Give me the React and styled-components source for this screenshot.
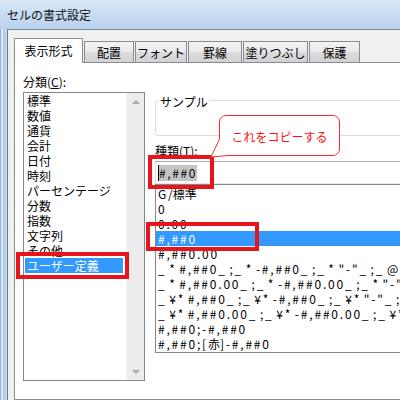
import React from 'react';
import styled, { createGlobalStyle } from 'styled-components';

const FONT = `"Noto Sans CJK JP", "Noto Sans", sans-serif`;

const Global = createGlobalStyle`
  html, body { margin: 0; padding: 0; width: 400px; height: 400px; overflow: hidden; background: #c9dcf1; }
  #root { width: 400px; height: 400px; overflow: hidden; }
`;

const Window = styled.div`
  width: 520px;
  height: 400px;
  display: flex;
  flex-direction: column;
  font-family: ${FONT};
  font-size: 12px;
  color: #000;
`;

const TitleBar = styled.div`
  height: 29px;
  flex: none;
  display: flex;
  align-items: center;
  padding-left: 7px;
  background: linear-gradient(#d9e7f6, #c6dbf1 55%, #b9d2ee);
  font-size: 12px;
  line-height: 15px;
  color: #111;
`;

const FrameRow = styled.div`
  flex: 1;
  display: flex;
  min-height: 0;
`;

const FrameEdge = styled.div`
  width: 7px;
  flex: none;
  background: linear-gradient(to right, #8eafd6 0, #8eafd6 1px, #dce9f7 1px, #dce9f7 3px, #a9c8ea 3px, #bcd5ef 6px, #cfe0f3 7px);
`;

const Body = styled.div`
  flex: 1;
  background: #f0f0f0;
  border-left: 1px solid #6d7b8b;
  border-top: 1px solid #7d8c9e;
  padding: 8px 0 0 6px;
  display: flex;
  flex-direction: column;
`;

const TabRow = styled.div`
  display: flex;
  align-items: flex-end;
  gap: 1px;
  height: 25px;
  margin-bottom: -1px;
  position: relative;
  z-index: 2;
`;

const Tab = styled.div`
  box-sizing: border-box;
  width: ${p => p.$w}px;
  height: ${p => (p.$active ? 25 : 22)}px;
  border: 1px solid #898c95;
  border-bottom: ${p => (p.$active ? 'none' : '1px solid #898c95')};
  background: ${p => (p.$active ? '#ffffff' : 'linear-gradient(#f3f3f3, #e9e9e9 50%, #dcdcdc 51%, #d2d2d2)')};
  display: flex;
  align-items: center;
  justify-content: center;
  font-size: 12px;
  line-height: 15px;
  padding-bottom: ${p => (p.$active ? 1 : 0)}px;
`;

const Panel = styled.div`
  flex: 1;
  background: #fff;
  border: 1px solid #898c95;
  position: relative;
  display: flex;
  padding-left: 8px;
`;

const LeftCol = styled.div`
  width: 122px;
  flex: none;
  display: flex;
  flex-direction: column;
`;

const Label = styled.div`
  line-height: 15px;
  margin-top: ${p => p.$mt}px;
  white-space: nowrap;
`;

const CategoryBox = styled.div`
  box-sizing: border-box;
  margin-top: 3px;
  height: 289px;
  border: 1px solid #828790;
  display: flex;
`;

const CategoryItems = styled.div`
  flex: 1;
  padding: 0 3px 0 1px;
`;

const Item = styled.div`
  line-height: 15px;
  height: 15px;
  padding-left: 2px;
  white-space: pre;
  background: ${p => (p.$sel ? '#3399ff' : 'transparent')};
  color: ${p => (p.$sel ? '#fff' : '#000')};
`;

const ScrollBar = styled.div`
  width: 17px;
  flex: none;
  background: #ececec;
  border-left: 1px solid #f4f4f4;
  display: flex;
  flex-direction: column;
  justify-content: space-between;
`;

const Arrow = styled.div`
  height: 17px;
  display: flex;
  align-items: center;
  justify-content: center;
  &::after {
    content: '';
    width: 0;
    height: 0;
    border-left: 4px solid transparent;
    border-right: 4px solid transparent;
    ${p => (p.$down ? 'border-top: 4px solid #a9a9a9;' : 'border-bottom: 4px solid #a9a9a9;')}
  }
`;

const RightCol = styled.div`
  flex: 1;
  margin-left: 10px;
  display: flex;
  flex-direction: column;
  min-width: 0;
`;

const GroupBox = styled.div`
  box-sizing: border-box;
  margin-top: 37px;
  height: 36px;
  border: 1px solid #d5dfe5;
  border-radius: 3px;
  position: relative;
`;

const Legend = styled.span`
  position: absolute;
  top: -7px;
  left: 3px;
  padding: 0 1px;
  background: #fff;
  line-height: 15px;
`;

const TextInput = styled.div`
  box-sizing: border-box;
  margin-top: 3px;
  height: 23px;
  border: 1px solid #dbdfe6;
  border-top-color: #abadb3;
  border-bottom-color: #e3e9ef;
  padding-left: 2px;
  display: flex;
  align-items: center;
`;

const Selected = styled.span`
  background: #c4c4c4;
  line-height: 16px;
  border-left: 1px solid #000;
  letter-spacing: 1.6px;
`;

const FormatList = styled.div`
  box-sizing: border-box;
  height: 169px;
  border: 1px solid #828790;
  padding-top: 1px;
  overflow: hidden;
`;

const FormatItem = styled(Item)`
  letter-spacing: 1.8px;
  word-spacing: -1.8px;
`;

const Kanji = styled.span`
  letter-spacing: 0;
`;

const RedBox = styled.div`
  position: absolute;
  box-sizing: border-box;
  left: ${p => p.$x}px;
  top: ${p => p.$y}px;
  width: ${p => p.$w}px;
  height: ${p => p.$h}px;
  border: 4px solid #e8141c;
  z-index: 3;
`;

const Bubble = styled.div`
  position: absolute;
  box-sizing: border-box;
  left: 204px;
  top: 52px;
  width: 121px;
  height: 41px;
  border: 1px solid #ff2a2a;
  border-radius: 7px;
  background: #fff;
  color: #ff1010;
  display: flex;
  align-items: center;
  justify-content: center;
  font-size: 12px;
  padding-top: 2px;
  z-index: 4;
`;

const Tail = styled.svg`
  position: absolute;
  left: 190px;
  top: 67px;
  z-index: 5;
  overflow: visible;
`;

const categories = ['標準', '数値', '通貨', '会計', '日付', '時刻', 'パーセンテージ', '分数', '指数', '文字列', 'その他', 'ユーザー定義'];

const formats = [
  ['G', '/標準'],
  ['0'],
  ['0.00'],
  ['#,##0'],
  ['#,##0.00'],
  ['_ * #,##0_ ;_ * -#,##0_ ;_ * "-"_ ;_ @_ '],
  ['_ * #,##0.00_ ;_ * -#,##0.00_ ;_ * "-"??_ ;_ @_ '],
  ['_ ¥* #,##0_ ;_ ¥* -#,##0_ ;_ ¥* "-"_ ;_ @_ '],
  ['_ ¥* #,##0.00_ ;_ ¥* -#,##0.00_ ;_ ¥* "-"??_ ;_ @_ '],
  ['#,##0;-#,##0'],
  ['#,##0;[', '赤', ']-#,##0'],
];

const tabs = [
  { label: '表示形式', w: 69, active: true },
  { label: '配置', w: 50 },
  { label: 'フォント', w: 52 },
  { label: '罫線', w: 54 },
  { label: '塗りつぶし', w: 65 },
  { label: '保護', w: 51 },
];

const isCJK = s => /[\u3000-\u9fff]/.test(s);

export default function App() {
  return (
    <>
      <Global />
      <Window>
        <TitleBar>セルの書式設定</TitleBar>
        <FrameRow>
          <FrameEdge />
          <Body>
            <TabRow>
              {tabs.map(t => (
                <Tab key={t.label} $w={t.w} $active={t.active}>{t.label}</Tab>
              ))}
            </TabRow>
            <Panel>
              <LeftCol>
                <Label $mt={11}>分類(<u>C</u>):</Label>
                <CategoryBox>
                  <CategoryItems>
                    {categories.map((c, i) => (
                      <Item key={c} $sel={i === categories.length - 1}>{c}</Item>
                    ))}
                  </CategoryItems>
                  <ScrollBar>
                    <Arrow />
                    <Arrow $down />
                  </ScrollBar>
                </CategoryBox>
              </LeftCol>
              <RightCol>
                <GroupBox>
                  <Legend>サンプル</Legend>
                </GroupBox>
                <Label $mt={7}>種類(T):</Label>
                <TextInput>
                  <Selected>#,##0</Selected>
                </TextInput>
                <FormatList>
                  {formats.map((parts, i) => (
                    <FormatItem key={i} $sel={i === 3}>
                      {parts.map((p, j) => (isCJK(p) ? <Kanji key={j}>{p}</Kanji> : p))}
                    </FormatItem>
                  ))}
                </FormatList>
              </RightCol>

              <RedBox $x={1} $y={189} $w={113} $h={27} />
              <RedBox $x={133} $y={92} $w={66} $h={34} />
              <RedBox $x={131} $y={159} $w={113} $h={29} />
              <Bubble>これをコピーする</Bubble>
              <Tail width="30" height="30" viewBox="0 0 30 30">
                <polygon points="14,9 6,27 23,26 23,23 16,23 16,9" fill="#fff" />
                <polyline points="14.5,9 6,27 23,25.5" fill="none" stroke="#ff2a2a" strokeWidth="1" />
              </Tail>
            </Panel>
          </Body>
        </FrameRow>
      </Window>
    </>
  );
}
